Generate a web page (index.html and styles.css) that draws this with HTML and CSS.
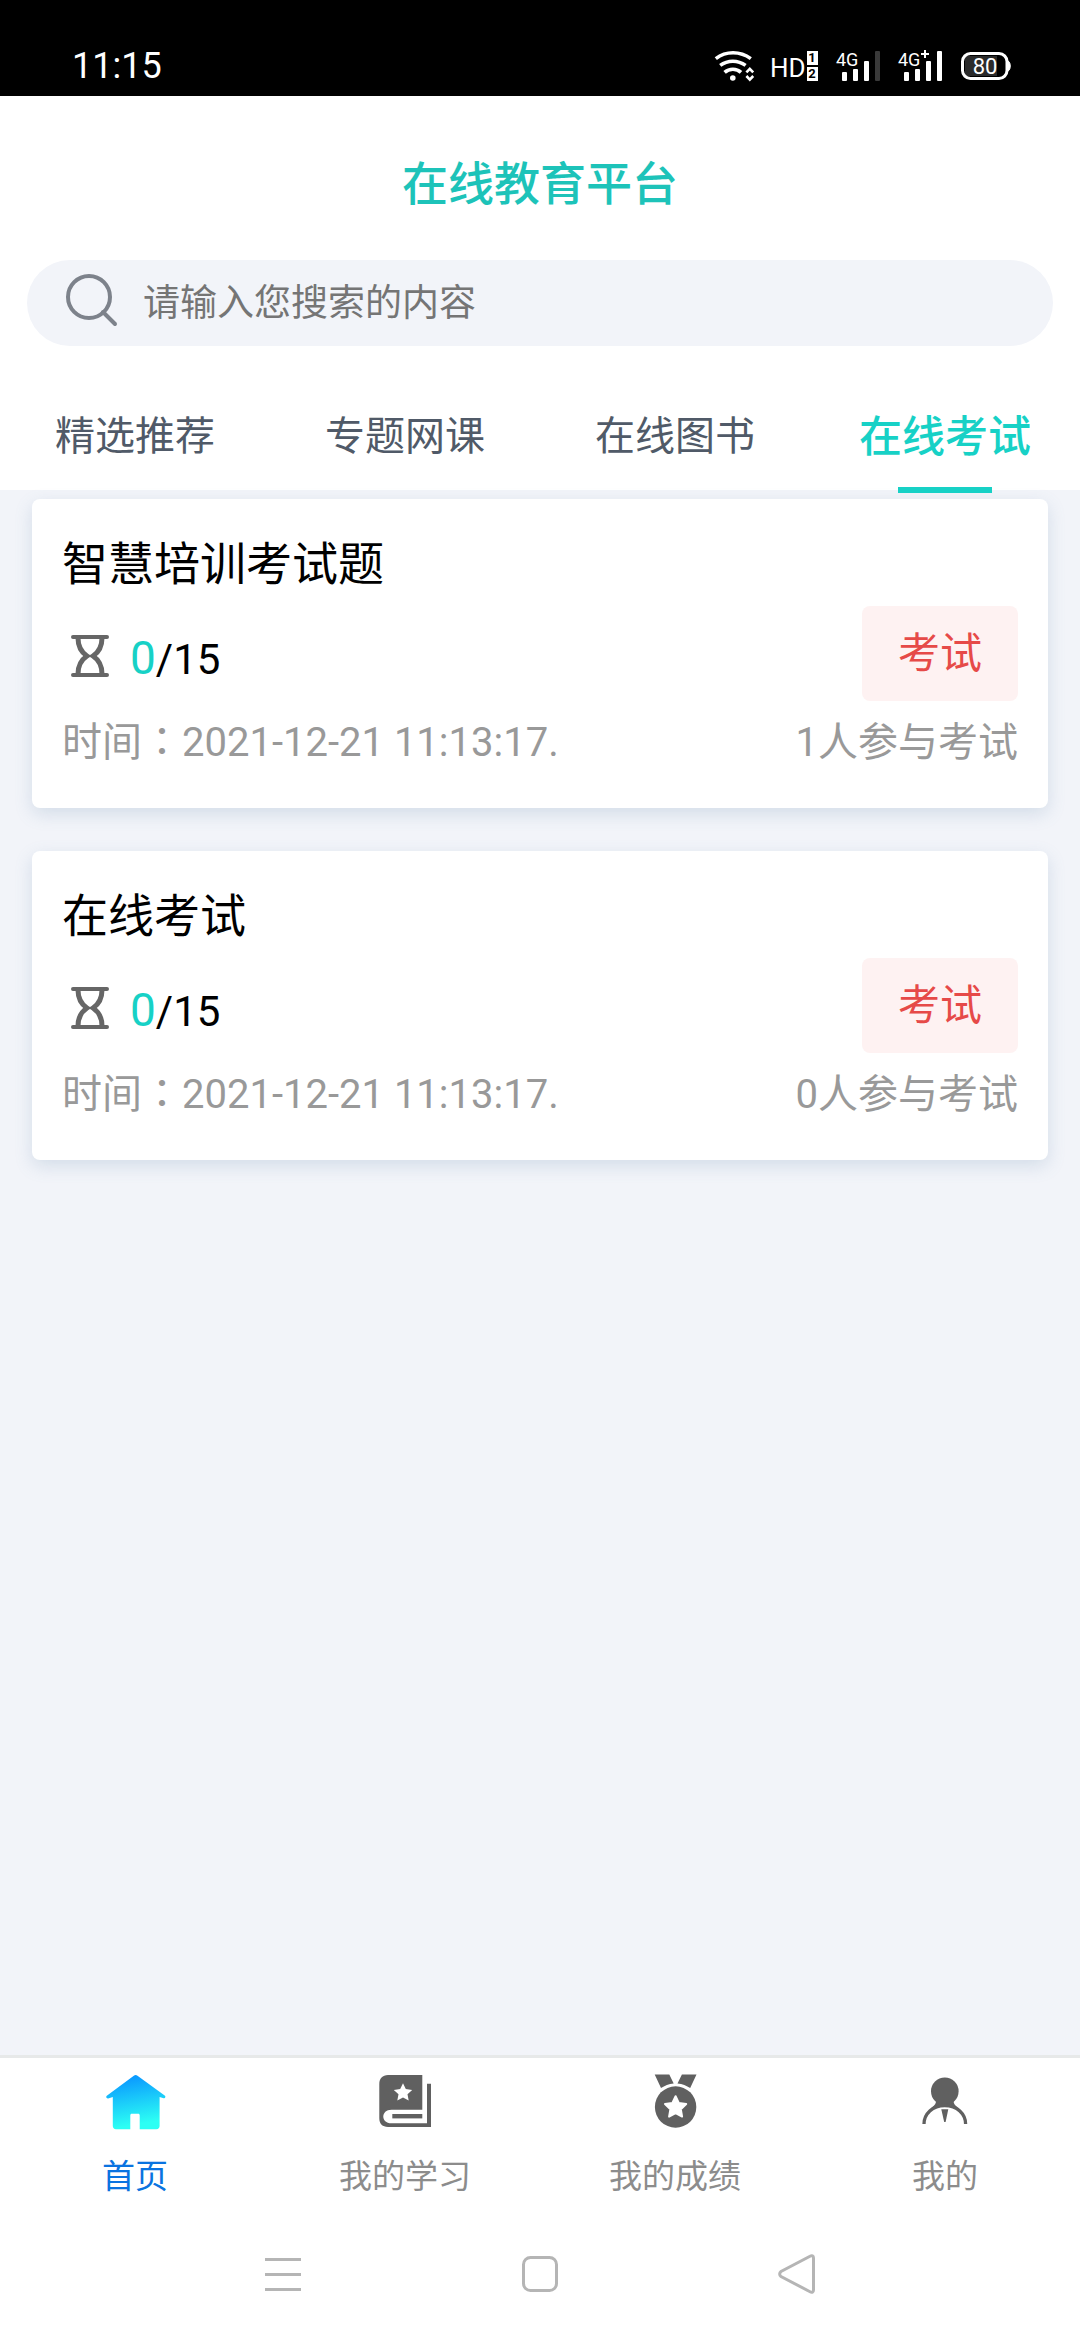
FILE: index.html
```html
<!DOCTYPE html>
<html lang="zh-CN">
<head>
    <meta charset="UTF-8">
    <meta name="viewport" content="width=device-width, initial-scale=1.0">
    <title>在线教育平台</title>
    <link rel="stylesheet" href="styles.css">
</head>
<body>

    <div class="status-bar">
        <span class="clock">11:15</span>
        <div class="status-icons">
            <svg width="40" height="32" viewBox="0 0 40 32" fill="none" stroke="#fff" stroke-width="3.6">
                <path d="M1.8 8.6C12 .8 26 .8 36.8 8.6"/>
                <path d="M6.2 15.4c7.6-5.6 17.6-5.6 25.4 0"/>
                <path d="M10.6 22.4c4.6-4.2 12-4.2 16.4 0"/>
                <circle cx="18.8" cy="28" r="2.8" fill="#fff" stroke="none"/>
                <path d="M32.4 22.4l3.4-3.6 3.4 3.6M32.4 26l3.4 3.6 3.4-3.6" stroke-width="2.6"/>
            </svg>
            <svg width="50" height="32" viewBox="0 0 50 32">
                <text class="st-hd" x="0" y="27">HD</text>
                <path d="M37 1h11v14H37zM37 17h11v14H37z" fill="#fff"/>
                <text class="st-sim" x="42" y="12">1</text>
                <text class="st-sim" x="42" y="28">2</text>
            </svg>
            <svg width="46" height="32" viewBox="0 0 46 32" fill="#fff">
                <text class="st-net" x="0" y="16">4G</text>
                <rect x="6" y="22" width="5" height="9" rx="1"/>
                <rect x="17" y="19" width="5" height="12" rx="1"/>
                <rect x="28" y="11" width="5" height="20" rx="1"/>
                <rect x="39" y="1" width="5" height="30" rx="1" fill="#3a3a3a"/>
            </svg>
            <svg width="46" height="32" viewBox="0 0 46 32" fill="#fff">
                <text class="st-net" x="0" y="16">4G</text>
                <path d="M26 0h2v3h3v2h-3v3h-2V5h-3V3h3z"/>
                <rect x="6" y="22" width="5" height="9" rx="1"/>
                <rect x="17" y="19" width="5" height="12" rx="1"/>
                <rect x="28" y="11" width="5" height="20" rx="1"/>
                <rect x="39" y="1" width="5" height="30" rx="1"/>
            </svg>
            <svg width="52" height="32" viewBox="0 0 52 32">
                <path d="M5 6h32v20H5z" fill="#2b2b2b"/>
                <rect x="2.5" y="3.5" width="44.5" height="25" rx="8" fill="none" stroke="#fff" stroke-width="3"/>
                <path d="M48 11c3 1 3 9 0 10z" fill="#fff" stroke="#fff"/>
                <text class="st-bat" x="25" y="24">80</text>
            </svg>
        </div>
    </div>

    <header class="header">
        <h1>在线教育平台</h1>
        <label class="search">
            <svg width="54" height="58" viewBox="0 0 54 58" fill="none" stroke="#7d828b" stroke-width="4" stroke-linecap="round">
                <circle cx="24" cy="23" r="21"/>
                <path d="M38 38l12 12"/>
            </svg>
            <input type="search" placeholder="请输入您搜索的内容" aria-label="搜索">
        </label>
        <nav class="tabs">
            <a href="#">精选推荐</a>
            <a href="#">专题网课</a>
            <a href="#">在线图书</a>
            <a href="#" class="active">在线考试</a>
        </nav>
    </header>

    <main class="exam-list">
        <article class="card">
            <h2>智慧培训考试题</h2>
            <div class="row">
                <div class="score">
                    <svg width="40" height="44" viewBox="0 0 40 44" fill="none" stroke="#666" stroke-width="4" stroke-linecap="round">
                        <path d="M3 3h34M3 41h34"/>
                        <path d="M8 4c0 9 3 14 9 18-6 4-9 10-9 18M32 4c0 9-3 14-9 18 6 4 9 10 9 18" stroke-width="5"/>
                    </svg>
                    <p><b>0</b>/15</p>
                </div>
                <button type="button" class="btn-exam">考试</button>
            </div>
            <div class="meta">
                <span>时间<i class="colon" lang="zh-TW">：</i>2021-12-21 11:13:17.</span>
                <span>1人参与考试</span>
            </div>
        </article>

        <article class="card">
            <h2>在线考试</h2>
            <div class="row">
                <div class="score">
                    <svg width="40" height="44" viewBox="0 0 40 44" fill="none" stroke="#666" stroke-width="4" stroke-linecap="round">
                        <path d="M3 3h34M3 41h34"/>
                        <path d="M8 4c0 9 3 14 9 18-6 4-9 10-9 18M32 4c0 9-3 14-9 18 6 4 9 10 9 18" stroke-width="5"/>
                    </svg>
                    <p><b>0</b>/15</p>
                </div>
                <button type="button" class="btn-exam">考试</button>
            </div>
            <div class="meta">
                <span>时间<i class="colon" lang="zh-TW">：</i>2021-12-21 11:13:17.</span>
                <span>0人参与考试</span>
            </div>
        </article>
    </main>

    <nav class="tabbar">
        <a href="#" class="active">
            <svg width="60" height="60" viewBox="0 0 60 60">
                <defs>
                    <linearGradient id="home" x1="0.4" y1="0" x2="0.6" y2="1">
                        <stop offset="0.05" stop-color="#0b9bff"/>
                        <stop offset="0.9" stop-color="#2cfff4"/>
                    </linearGradient>
                </defs>
                <path fill="url(#home)" d="M28.8 3.8c1.2-1 2.5-1 3.7 0L60 23.800c1 1 0 3-1.400 2.400L54.600 25v29c0 2-1.200 3.200-3.200 3.200H34.700V43.400c0-1-.6-1.600-1.600-1.600h-6.200c-1 0-1.600.6-1.600 1.600v13.800H11c-2 0-3.200-1.200-3.200-3.200V25l-4.600 1.400C1.400 26.800.6 24.800 1.800 23.800z"/>
            </svg>
            <span>首页</span>
        </a>
        <a href="#">
            <svg width="60" height="60" viewBox="0 0 60 60" fill="#606060">
                <path d="M13 3h34.300v34.700H16.500c-10.900 0-10.900 13.600 0 13.600H52V11.700h4V55H13c-5.500 0-8.700-3.200-8.700-8.700V12C4.300 6.500 7.500 3 13 3z"/>
                <path d="M17.300 42h30v4.400h-30z"/>
                <path fill="#fff" d="M28 11.200l2.800 5.800 6.400.9-4.700 4.400 1.200 6.300-5.700-3.100-5.700 3.100 1.200-6.300-4.700-4.400 6.400-.9z"/>
            </svg>
            <span>我的学习</span>
        </a>
        <a href="#">
            <svg width="60" height="60" viewBox="0 0 60 60" fill="#606060">
                <path d="M9.700 2.600h14.600l4.400 8.800c-5 .6-9 2-12.700 4.700zM51.500 2.600H36.900l-4.400 8.800c5 .6 9 2 12.700 4.700z"/>
                <circle cx="30.600" cy="35" r="20.700"/>
                <path fill="#fff" stroke="#fff" stroke-width="2" stroke-linejoin="round" d="M30.600 24.200l3.200 6.800 7.400 1-5.400 5.200 1.300 7.400-6.500-3.500-6.500 3.500 1.300-7.400L20 32l7.400-1z"/>
            </svg>
            <span>我的成绩</span>
        </a>
        <a href="#">
            <svg width="60" height="60" viewBox="0 0 60 60" fill="#606060">
                <circle cx="29.800" cy="19.300" r="13.800"/>
                <path d="M21 29h17.600c0 2.600 1.200 4 3.400 6H17.600c2.200-2 3.400-3.400 3.400-6z"/>
                <path fill="#fff" stroke="#606060" stroke-width="3.300" d="M9 52c0-10 8.500-18.500 20.800-18.500S50.600 42 50.600 52"/>
                <path d="M26.300 37.300h7L30.600 50h-1.400z"/>
            </svg>
            <span>我的</span>
        </a>
    </nav>

    <div class="sys-nav">
        <button type="button" aria-label="菜单">
            <svg width="36" height="40" viewBox="0 0 36 40" stroke="#b5b5b5" stroke-width="3">
                <path d="M0 5.500h36M0 20.500h36M0 35.500h36"/>
            </svg>
        </button>
        <button type="button" aria-label="主屏幕">
            <svg width="36" height="40" viewBox="0 0 36 40" fill="none" stroke="#b5b5b5" stroke-width="3">
                <rect x="1.500" y="3.500" width="33" height="33" rx="7"/>
            </svg>
        </button>
        <button type="button" aria-label="返回">
            <svg width="36" height="40" viewBox="0 0 36 40" fill="none" stroke="#b5b5b5" stroke-width="3">
                <path d="M31 2.300c2-1.200 3.500-.4 3.500 1.700v32c0 2.100-1.500 2.900-3.500 1.700L2 22.500c-1.800-1.400-1.800-3.600 0-5z"/>
            </svg>
        </button>
    </div>

</body>
</html>
```
FILE: styles.css
```css
:root { --bg: #f2f4f9; --teal: #17d1c6; --grey: #999; --font: Roboto, "Noto Sans CJK SC", sans-serif; }
* { box-sizing: border-box; }
body { margin: 0; min-height: 100vh; display: flex; flex-direction: column; background: var(--bg); color: #000; font-family: var(--font); }
h1, h2, p { margin: 0; font-weight: 400; }
a { text-decoration: none; }
button { border: none; font-family: var(--font); cursor: pointer; }
svg { display: block; flex: none; overflow: visible; }

/* status bar */
.status-bar { display: flex; align-items: center; justify-content: space-between; height: 96px; padding: 36px 68px 0 72px; background: #000; color: #fff; }
.clock { font-size: 36px; }
.status-icons { display: flex; gap: 16px; }
.status-icons text { fill: #fff; }
.status-icons .st-hd { font-size: 26px; }
.status-icons .st-sim { fill: #000; font-size: 13px; font-weight: 700; text-anchor: middle; }
.status-icons .st-net { font-size: 18px; }
.status-icons .st-bat { font-size: 22px; text-anchor: middle; }

/* header */
.header { background: #fff; }
.header h1 { padding: 54px 0 42px; font-size: 46px; line-height: 68px; font-weight: 500; text-align: center; color: #1dc3b9; }
.search { display: flex; align-items: center; gap: 24px; height: 86px; margin: 0 27px; padding: 0 38px; border-radius: 43px; background: var(--bg); }
.search input { flex: 1; min-width: 0; padding: 0; border: none; outline: none; background: none; font-family: var(--font); font-size: 37px; color: #333; }
.search input::placeholder { color: #757575; }

.tabs { display: flex; }
.tabs a { position: relative; flex: 1; padding: 58px 0 20px; font-size: 40px; line-height: 66px; text-align: center; color: #505a68; }
.tabs .active { font-size: 43px; font-weight: 500; color: var(--teal); }
.tabs .active::after { content: ""; position: absolute; left: 50%; bottom: -3px; width: 94px; height: 6px; margin-left: -47px; background: var(--teal); }

/* exam cards */
.exam-list { flex: 1; display: flex; flex-direction: column; gap: 43px; padding: 9px 32px; }
.card { padding: 35px 30px 35px; border-radius: 8px; background: #fff; box-shadow: 0 6px 18px rgba(90, 130, 170, 0.2); }
.card h2 { font-size: 46px; line-height: 60px; }
.row { display: flex; align-items: center; justify-content: space-between; margin: 12px 0; }
.score { display: flex; align-items: center; gap: 20px; padding: 4px 0 0 8px; }
.score p { padding-top: 6px; font-size: 42px; line-height: 60px; }
.score b { font-size: 46px; font-weight: 400; color: var(--teal); }
.btn-exam { width: 156px; height: 95px; padding: 0 0 8px; border-radius: 8px; background: #fef2f2; color: #e64a48; font-size: 42px; }
.meta { display: flex; justify-content: space-between; font-size: 40px; line-height: 60px; color: var(--grey); }
.colon { font-style: normal; font-family: "Noto Sans CJK TC", sans-serif; line-height: 0; }

/* bottom bars */
.tabbar { display: flex; padding: 14px 0 6px; border-top: 3px solid #e7e9e9; background: #fff; }
.tabbar a { flex: 1; display: flex; flex-direction: column; align-items: center; gap: 20px; font-size: 33px; line-height: 50px; color: #8c8c8c; }
.tabbar .active { color: #0a73e0; }
.sys-nav { display: flex; align-items: center; justify-content: center; gap: 221px; height: 132px; background: #fff; }
.sys-nav button { padding: 0; background: none; }
```
